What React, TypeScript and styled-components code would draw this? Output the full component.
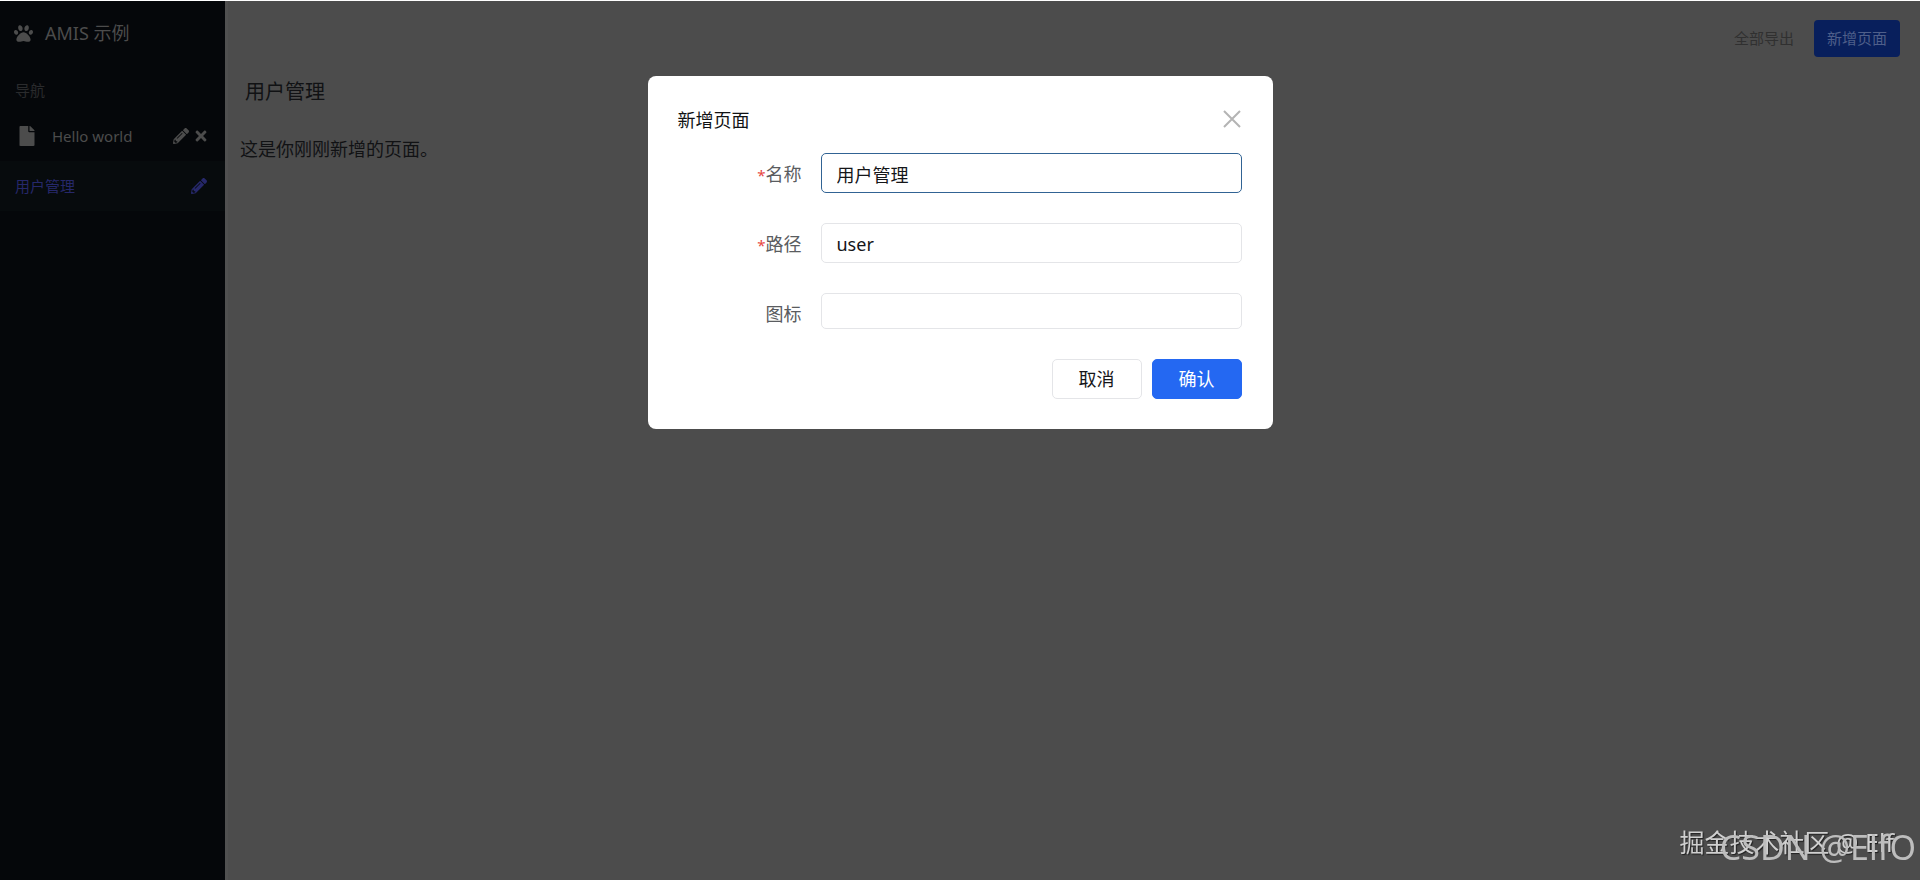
import React, { useState } from "react";
import styled, { createGlobalStyle } from "styled-components";
import { FaPaw, FaFile, FaPencilAlt, FaTimes } from "react-icons/fa";

const GlobalStyle = createGlobalStyle`
  *, *::before, *::after { box-sizing: border-box; }
  body {
    margin: 0;
    background: #4c4c4c;
    color: #111214;
    font-family: "Noto Sans", "Noto Sans CJK SC", sans-serif;
    font-size: 18px;
    line-height: 24px;
    overflow: hidden;
  }
  button, input { font: inherit; }
  h1, h2, p { margin: 0; font-weight: 400; }
`;

const Shell = styled.div`
  display: flex;
  min-height: 100vh;
  border-top: 1px solid #ffffff;
`;

const Sidebar = styled.aside`
  flex: none;
  width: 225px;
  background: #05070a;
  color: #4c4c4c;
`;

const Brand = styled.div`
  display: flex;
  align-items: center;
  gap: 12px;
  height: 64px;
  padding: 0 14px;
`;

const NavLabel = styled.div`
  height: 46px;
  padding: 13px 15px 0;
  font-size: 15px;
  color: #2a2b2d;
`;

const NavItem = styled.div<{ $active?: boolean }>`
  display: flex;
  align-items: center;
  gap: 6px;
  height: 50px;
  padding: 0 18px 0 15px;
  background: ${(p) => (p.$active ? "#070b0d" : "transparent")};
  color: ${(p) => (p.$active ? "#26286a" : "#4c4c4c")};
`;

const NavLink = styled.a`
  display: flex;
  align-items: center;
  flex: 1;
  gap: 15px;
  color: inherit;
  font-size: 15px;
  text-decoration: none;
  svg { margin-left: 2px; }
`;

const IconButton = styled.button`
  display: flex;
  padding: 0;
  border: 0;
  background: none;
  color: inherit;
`;

const RemoveIcon = styled(FaTimes)`
  width: 12px;
  height: 16px;
`;

const Main = styled.main`
  flex: 1;
  min-width: 0;
  border-left: 3px solid #505050;
`;

const Header = styled.header`
  display: flex;
  align-items: center;
  justify-content: flex-end;
  gap: 20px;
  height: 64px;
  padding: 10px 20px 0;
`;

const ExportLink = styled.a`
  color: #303030;
  font-size: 15px;
  text-decoration: none;
`;

const AddButton = styled.button`
  height: 37px;
  padding: 0 13px;
  border: 0;
  border-radius: 4px;
  background: #081f5c;
  color: #4f5f8a;
  font-size: 15px;
`;

const PageTitle = styled.h1`
  padding: 15px 17px 9px;
  font-size: 20px;
`;

const PageBody = styled.p`
  padding: 24px 12px;
`;

const Backdrop = styled.div`
  position: fixed;
  inset: 0;
  display: flex;
  align-items: flex-start;
  justify-content: center;
  padding-top: 76px;
`;

const Dialog = styled.form`
  width: 625px;
  padding: 30px 31px 30px 30px;
  border-radius: 8px;
  background: #ffffff;
`;

const DialogHead = styled.div`
  display: flex;
  align-items: flex-start;
  justify-content: space-between;
  height: 47px;
`;

const DialogTitle = styled.h2`
  padding-top: 2px;
  font-size: 18px;
`;

const CloseButton = styled(IconButton)`
  padding: 4px 1px;
  color: #b4b4b4;
`;

const Field = styled.div`
  display: grid;
  grid-template-columns: 124px 1fr;
  column-gap: 19px;
  margin-bottom: 30px;
`;

const Label = styled.label`
  padding-top: 9px;
  color: #5a5c60;
  text-align: right;
`;

const Required = styled.span`
  color: #e8463f;
  font-size: 15px;
`;

const Input = styled.input<{ $focus?: boolean; $short?: boolean }>`
  width: 100%;
  height: ${(p) => (p.$short ? 36 : 40)}px;
  padding: 2px 15px 0;
  border: 1px solid ${(p) => (p.$focus ? "#316394" : "#e4e5e8")};
  border-radius: 5px;
  background: #ffffff;
  color: #151619;
  outline: none;
`;

const Actions = styled.div`
  display: flex;
  justify-content: flex-end;
  gap: 10px;
`;

const ActionButton = styled.button<{ $primary?: boolean }>`
  width: 90px;
  height: 40px;
  padding: 0;
  border: 1px solid ${(p) => (p.$primary ? "#2468f2" : "#e4e5e8")};
  border-radius: 5px;
  background: ${(p) => (p.$primary ? "#2468f2" : "#ffffff")};
  color: ${(p) => (p.$primary ? "#ffffff" : "#151619")};
`;

const CommunityMark = styled.div`
  position: fixed;
  right: 26px;
  bottom: 20px;
  color: #d0d0d0;
  font-size: 25px;
  line-height: 36px;
  text-shadow: 1px 1px 1px #202020;
`;

const AuthorMark = styled.div`
  position: fixed;
  right: 4px;
  bottom: 11px;
  color: #bdbdbd;
  font-size: 34px;
  line-height: 44px;
`;

export default function App() {
  const [name, setName] = useState("用户管理");
  const [path, setPath] = useState("user");
  const [icon, setIcon] = useState("");

  return (
    <>
      <GlobalStyle />
      <Shell>
        <Sidebar>
          <Brand>
            <FaPaw size={19} />
            <span>AMIS 示例</span>
          </Brand>
          <nav>
            <NavLabel>导航</NavLabel>
            <NavItem>
              <NavLink href="#hello">
                <FaFile size={20} />
                Hello world
              </NavLink>
              <IconButton type="button" aria-label="编辑">
                <FaPencilAlt size={16} />
              </IconButton>
              <IconButton type="button" aria-label="删除">
                <RemoveIcon />
              </IconButton>
            </NavItem>
            <NavItem $active>
              <NavLink href="#user">用户管理</NavLink>
              <IconButton type="button" aria-label="编辑">
                <FaPencilAlt size={16} />
              </IconButton>
            </NavItem>
          </nav>
        </Sidebar>
        <Main>
          <Header>
            <ExportLink href="#export">全部导出</ExportLink>
            <AddButton type="button">新增页面</AddButton>
          </Header>
          <PageTitle>用户管理</PageTitle>
          <PageBody>这是你刚刚新增的页面。</PageBody>
        </Main>
      </Shell>
      <Backdrop>
        <Dialog role="dialog" aria-labelledby="dialog-title" onSubmit={(e) => e.preventDefault()}>
          <DialogHead>
            <DialogTitle id="dialog-title">新增页面</DialogTitle>
            <CloseButton type="button" aria-label="关闭">
              <svg width="18" height="18" viewBox="0 0 18 18" fill="none" stroke="currentColor" strokeWidth="2">
                <path d="M1 1l16 16M17 1L1 17" />
              </svg>
            </CloseButton>
          </DialogHead>
          <Field>
            <Label htmlFor="name"><Required>*</Required>名称</Label>
            <Input id="name" $focus value={name} onChange={(e) => setName(e.target.value)} />
          </Field>
          <Field>
            <Label htmlFor="path"><Required>*</Required>路径</Label>
            <Input id="path" value={path} onChange={(e) => setPath(e.target.value)} />
          </Field>
          <Field>
            <Label htmlFor="icon">图标</Label>
            <Input id="icon" $short value={icon} onChange={(e) => setIcon(e.target.value)} />
          </Field>
          <Actions>
            <ActionButton type="button">取消</ActionButton>
            <ActionButton type="submit" $primary>确认</ActionButton>
          </Actions>
        </Dialog>
      </Backdrop>
      <CommunityMark>掘金技术社区 @ Elf</CommunityMark>
      <AuthorMark>CSDN @ElfO</AuthorMark>
    </>
  );
}
